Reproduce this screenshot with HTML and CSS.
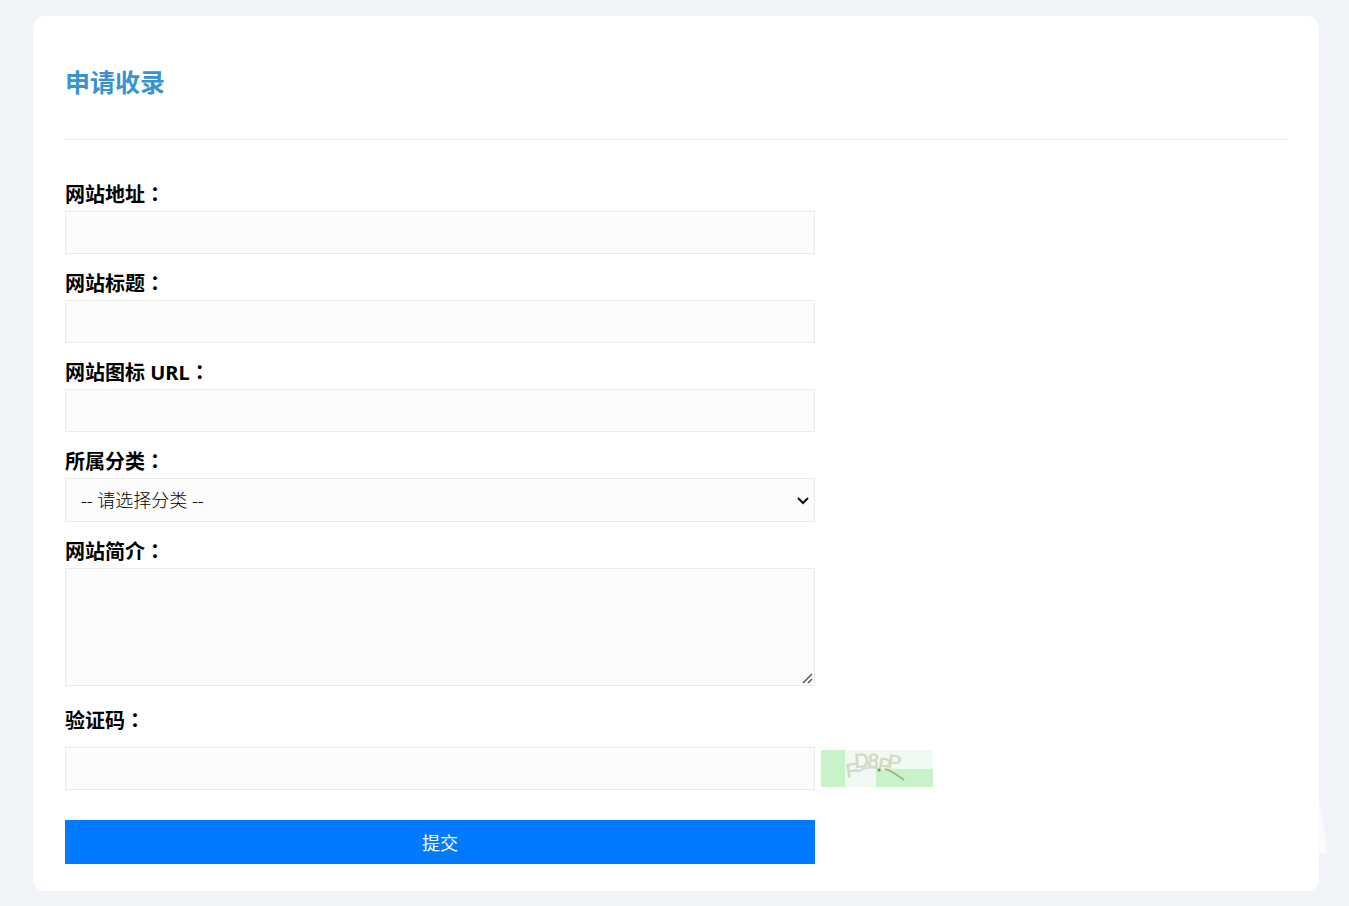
FILE: index.html
```html
<!DOCTYPE html>
<html lang="zh-CN">
<head>
<meta charset="utf-8">
<meta name="viewport" content="width=device-width, initial-scale=1">
<title>申请收录</title>
<link rel="stylesheet" href="styles.css">
</head>
<body>
<main class="card">
  <h1 class="title">申请收录</h1>
  <form class="form">
    <div class="field">
      <label for="site-url">网站地址<span class="colon" lang="zh-Hant">：</span></label>
      <input class="control" id="site-url" type="text">
    </div>
    <div class="field">
      <label for="site-title">网站标题<span class="colon" lang="zh-Hant">：</span></label>
      <input class="control" id="site-title" type="text">
    </div>
    <div class="field">
      <label for="site-icon">网站图标 URL<span class="colon" lang="zh-Hant">：</span></label>
      <input class="control" id="site-icon" type="text">
    </div>
    <div class="field">
      <label for="category">所属分类<span class="colon" lang="zh-Hant">：</span></label>
      <div class="control-wrap">
        <select class="control select" id="category">
          <option>-- 请选择分类 --</option>
        </select>
        <svg class="chevron" width="12" height="8" viewBox="0 0 12 8" aria-hidden="true">
          <path d="M1 1L6 6L11 1" fill="none" stroke="#111" stroke-width="2"/>
        </svg>
      </div>
    </div>
    <div class="field">
      <label for="intro">网站简介<span class="colon" lang="zh-Hant">：</span></label>
      <div class="control-wrap">
        <textarea class="control textarea" id="intro"></textarea>
        <svg class="grip" width="11" height="11" viewBox="0 0 11 11" aria-hidden="true">
          <path d="M1 10L10 1M6 10L10 6" fill="none" stroke="#555" stroke-width="1.5"/>
        </svg>
      </div>
    </div>
    <div class="field captcha">
      <label for="code">验证码<span class="colon" lang="zh-Hant">：</span></label>
      <div class="captcha-row">
        <input class="control" id="code" type="text">
        <svg class="captcha-image" width="112" height="37" viewBox="0 0 112 37" role="img" aria-label="验证码图片">
          <rect width="112" height="37" fill="#f1faf2"/>
          <rect width="24" height="37" fill="#c8f2c9"/>
          <rect x="55" y="19" width="57" height="18" fill="#c8f2c9"/>
          <g class="captcha-text">
            <text transform="translate(26 28) rotate(-8)">F</text>
            <text transform="translate(34 18) rotate(-4)">D</text>
            <text transform="translate(46 17) rotate(6)">8</text>
            <text transform="translate(56 21) rotate(10)">P</text>
            <text transform="translate(66 18) rotate(8)">P</text>
          </g>
          <path d="M36 22C44 17 49 17 57 18" fill="none" stroke="#cddcda" stroke-width="2"/>
          <path d="M64 19C70 20 76 25 83 30" fill="none" stroke="#a5b678" stroke-width="2"/>
          <circle cx="58" cy="20" r="1.5" fill="#6f9068"/>
        </svg>
      </div>
    </div>
    <button class="submit" type="submit">提交</button>
  </form>
  <svg class="edge" width="8" height="48" viewBox="0 0 8 48" aria-hidden="true">
    <path d="M0 0L3 14L6 29L8 48H0Z" fill="#f9fbfd"/>
  </svg>
</main>
</body>
</html>
```
FILE: styles.css
```css
* {
  box-sizing: border-box;
}

body {
  margin: 0;
  padding: 16px 30px 15px 33px;
  background: #f0f3f8;
  color: #000;
  font-family: "Noto Sans", "Noto Sans CJK SC", sans-serif;
}

.card {
  position: relative;
  padding: 32px 31px 27px 32px;
  border-radius: 12px;
  background: #fff;
}

.title {
  margin: 0;
  padding: 15px 0 38px;
  border-bottom: 1px solid #ebebeb;
  color: #3894cf;
  font-size: 25px;
  line-height: 38px;
}

.form {
  display: flex;
  flex-direction: column;
  gap: 14px;
  max-width: 750px;
  padding-top: 39px;
}

.field {
  display: flex;
  flex-direction: column;
}

label {
  font-size: 20px;
  font-weight: 700;
  line-height: 32px;
}

.colon {
  font-family: "Noto Sans CJK TC", sans-serif;
  line-height: 1;
}

.control-wrap {
  display: flex;
  position: relative;
}

.control {
  width: 100%;
  height: 43px;
  margin: 0;
  padding: 8px 14px;
  border: 1px solid #ebebeb;
  border-radius: 0;
  background: #fcfcfc;
  color: #000;
  font-family: inherit;
  font-size: 18px;
}

.select {
  height: 44px;
  padding: 8px 32px 8px 15px;
  appearance: none;
  font-weight: 300;
}

.chevron {
  position: absolute;
  top: 19px;
  right: 6px;
  pointer-events: none;
}

.textarea {
  height: 118px;
  resize: vertical;
}

.textarea::-webkit-resizer {
  background: #fcfcfc;
}

.grip {
  position: absolute;
  right: 2px;
  bottom: 2px;
  pointer-events: none;
}

.captcha {
  gap: 10px;
  padding-top: 5px;
}

.captcha-row {
  display: flex;
  align-items: center;
  gap: 6px;
}

.captcha-row .control,
.captcha-image {
  flex-shrink: 0;
}

.captcha-text {
  fill: #d6d7c2;
  stroke: #d6d7c2;
  stroke-width: 0.5px;
  font-family: "Liberation Sans", sans-serif;
  font-size: 20px;
}

.submit {
  height: 44px;
  margin: 16px 0 0;
  padding: 0;
  border: 0;
  background: #007bff;
  color: #fff;
  font-family: inherit;
  font-size: 18px;
}

.edge {
  position: absolute;
  right: -8px;
  bottom: 38px;
}
```
